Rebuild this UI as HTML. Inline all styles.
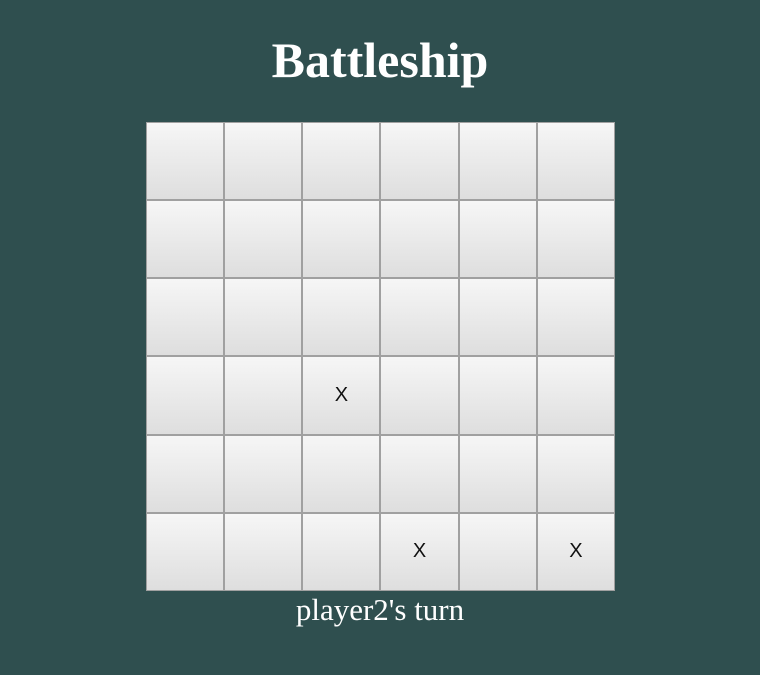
<!DOCTYPE html>
<html><head><style>
html,body{margin:0;padding:0;background:#2f4f4f;width:760px;height:675px;overflow:hidden}
h1{margin:0;position:absolute;top:31px;left:0;width:760px;text-align:center;font:bold 50px "Liberation Serif",serif;color:#fff}
.grid{position:absolute;left:146px;top:122px;width:469px;height:469px;display:grid;grid-template-columns:repeat(6,1fr);grid-template-rows:repeat(6,1fr)}
.c{box-sizing:border-box;border:1px solid #a0a0a0;background:linear-gradient(#f6f6f6,#dedede);display:flex;align-items:center;justify-content:center;font:20px "Liberation Sans",sans-serif;color:#111}
p{position:absolute;top:592px;left:0;width:760px;margin:0;text-align:center;font:31px "Liberation Serif",serif;color:#fff}
</style></head><body>
<h1>Battleship</h1>
<div class="grid">
<div class="c"></div><div class="c"></div><div class="c"></div><div class="c"></div><div class="c"></div><div class="c"></div>
<div class="c"></div><div class="c"></div><div class="c"></div><div class="c"></div><div class="c"></div><div class="c"></div>
<div class="c"></div><div class="c"></div><div class="c"></div><div class="c"></div><div class="c"></div><div class="c"></div>
<div class="c"></div><div class="c"></div><div class="c">X</div><div class="c"></div><div class="c"></div><div class="c"></div>
<div class="c"></div><div class="c"></div><div class="c"></div><div class="c"></div><div class="c"></div><div class="c"></div>
<div class="c"></div><div class="c"></div><div class="c"></div><div class="c">X</div><div class="c"></div><div class="c">X</div>
</div>
<p>player2's turn</p>
</body></html>
